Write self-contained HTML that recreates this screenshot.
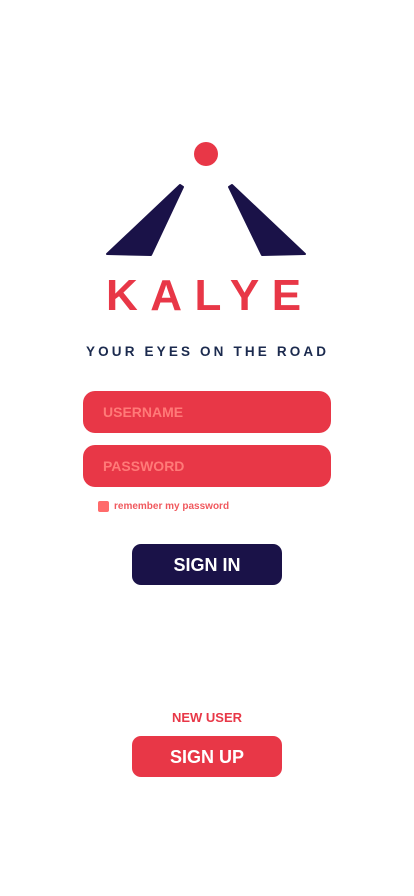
<!DOCTYPE html>
<html><head><style>
body{margin:0;width:414px;height:896px;background:#fff;font-family:"Liberation Sans",sans-serif;position:relative;overflow:hidden}
.a{position:absolute}
.inp{left:83px;width:248px;height:42px;background:#e83747;border-radius:12px;color:#ff7a78;font-weight:bold;font-size:14px;line-height:42px;text-indent:20px}
.btn{left:132px;width:150px;height:41px;border-radius:9px;color:#fff;font-weight:bold;font-size:18px;text-align:center;line-height:42px}
</style></head><body>
<svg class="a" style="left:0;top:0" width="414" height="300">
<circle cx="206" cy="154" r="12" fill="#e83747"/>
<polygon points="180,185 183,187 151,255 107,254" fill="#1a1248" stroke="#1a1248" stroke-width="2" stroke-linejoin="round"/>
<polygon points="232,185 229,187 262,255 305,254" fill="#1a1248" stroke="#1a1248" stroke-width="2" stroke-linejoin="round"/>
</svg>
<div class="a" style="left:106px;top:271px;width:240px;font-size:44px;font-weight:900;color:#e83747;letter-spacing:12.5px;line-height:50px">KALYE</div>
<div class="a" style="left:86px;top:344px;width:280px;font-size:13.5px;font-weight:900;color:#1b2a4e;letter-spacing:3.15px">YOUR EYES ON THE ROAD</div>
<div class="a inp" style="top:391px">USERNAME</div>
<div class="a inp" style="top:445px">PASSWORD</div>
<div class="a" style="left:98px;top:501px;width:11px;height:11px;background:#ff6b6b;border-radius:2px"></div>
<div class="a" style="left:114px;top:501px;font-size:10px;color:#f0595e;font-weight:bold">remember my password</div>
<div class="a btn" style="top:544px;background:#1a1248">SIGN IN</div>
<div class="a" style="left:0;width:414px;text-align:center;top:710px;font-size:13px;font-weight:bold;color:#e83747">NEW USER</div>
<div class="a btn" style="top:736px;background:#e83747">SIGN UP</div>
</body></html>
